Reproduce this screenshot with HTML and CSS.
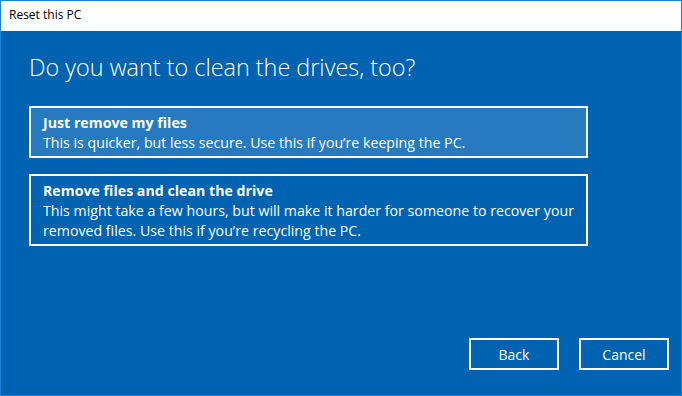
FILE: index.html
```html
<!DOCTYPE html>
<html lang="en">
<head>
  <meta charset="UTF-8">
  <title>Reset this PC</title>
  <link rel="stylesheet" href="styles.css">
</head>
<body>
  <div class="window">
    <div class="titlebar">Reset this PC</div>

    <div class="content">
      <h1 class="heading">Do you want to clean the drives, too?</h1>

      <div class="options">
        <div class="option selected">
          <div class="option-title">Just remove my files</div>
          <div class="option-text">This is quicker, but less secure. Use this if you’re keeping the PC.</div>
        </div>
        <div class="option">
          <div class="option-title">Remove files and clean the drive</div>
          <div class="option-text">This might take a few hours, but will make it harder for someone to recover your removed files. Use this if you’re recycling the PC.</div>
        </div>
      </div>

      <div class="buttons">
        <button class="btn">Back</button>
        <button class="btn">Cancel</button>
      </div>
    </div>
  </div>
</body>
</html>
```

FILE: styles.css
```css
html, body {
  margin: 0;
  padding: 0;
  height: 100%;
}

body {
  font-family: 'Open Sans', 'Noto Sans', sans-serif;
  color: white;
}

.window {
  box-sizing: border-box;
  height: 396px;
  width: 682px;
  display: flex;
  flex-direction: column;
  border: 1px solid #1883d7;
  background-color: #0063b1;
}

.titlebar {
  height: 30px;
  background-color: white;
  color: #000;
  font-size: 12px;
  padding-left: 8px;
  line-height: 28px;
}

.content {
  flex-grow: 1;
  display: flex;
  flex-direction: column;
  padding: 0 12px 25px 28px;
}

.heading {
  font-weight: 300;
  font-size: 23.4px;
  margin: 18px 0 21px 0;
  line-height: 36px;
}

.options {
  display: flex;
  flex-direction: column;
  gap: 16px;
  width: 559px;
}

.option {
  border: 2px solid white;
  padding: 5px 12px 3px 12px;
  font-size: 14.2px;
  line-height: 20px;
}

.option.selected {
  background-color: #277abf;
}

.option-title {
  font-weight: bold;
}

.buttons {
  margin-top: auto;
  display: flex;
  justify-content: flex-end;
  gap: 20px;
}

.btn {
  width: 90px;
  height: 32px;
  background-color: transparent;
  border: 2px solid white;
  color: white;
  font-family: inherit;
  font-size: 14px;
  padding: 0;
}
```
